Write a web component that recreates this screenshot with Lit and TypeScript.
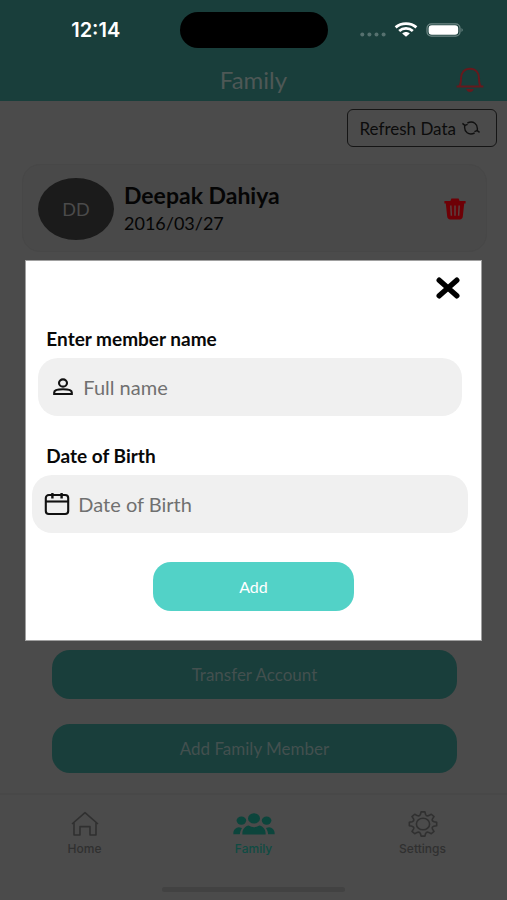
import { LitElement, html, css, svg } from "lit";
import { customElement } from "lit/decorators.js";

const gearPath = (() => {
  const points: string[] = [];
  const teeth = 8;
  for (let i = 0; i < teeth; i++) {
    const base = (i * 2 * Math.PI) / teeth - Math.PI / 2;
    const at = (offset: number, r: number) =>
      `${(16 + r * 1.13 * Math.cos(base + offset)).toFixed(2)} ${(14 + r * Math.sin(base + offset)).toFixed(2)}`;
    points.push(`${i === 0 ? "M" : "L"}${at(-0.24, 9.8)}`);
    points.push(`L${at(-0.14, 12.2)}`);
    points.push(`L${at(0.14, 12.2)}`);
    points.push(`L${at(0.24, 9.8)}`);
    points.push(`Q${at(0.39, 8.2)} ${at(0.54, 9.8)}`);
  }
  return points.join(" ") + "Z";
})();

const icons = {
  wifi: svg`<svg width="24" height="16" viewBox="0 0 24 16" aria-hidden="true">
    <g fill="none" stroke="#fff" stroke-width="2.8">
      <path d="M1.6 5.4C7.4 0.4 16.6 0.4 22.4 5.4"/><path d="M5.2 9C9 5.6 15 5.6 18.8 9"/>
    </g>
    <path d="M8.2 11.4C10.4 9.4 13.6 9.4 15.8 11.4L12 14.8Z" fill="#fff"/></svg>`,
  battery: svg`<svg width="38" height="14" viewBox="0 0 38 14" aria-hidden="true">
    <rect x="1" y="0.8" width="33" height="12.4" rx="4.4" fill="none" stroke="#6f8886" stroke-width="1.2"/>
    <rect x="2.6" y="2.2" width="29.6" height="9.6" rx="3.2" fill="#fff"/>
    <path d="M35.5 5Q38 7 35.5 9Z" fill="#6f8886"/></svg>`,
  dots: svg`<svg width="26" height="5" viewBox="0 0 26 5" aria-hidden="true" fill="#56716f">
    <circle cx="2.3" cy="2.5" r="2"/><circle cx="9.4" cy="2.5" r="2"/><circle cx="16.5" cy="2.5" r="2"/><circle cx="23.6" cy="2.5" r="2"/></svg>`,
  bell: svg`<svg width="28" height="26" viewBox="0 0 28 26" aria-hidden="true">
    <path d="M0.6 19.4H27.4M3.2 19.3C5 17 5 15 5 11.5C5 5.5 8.4 1.8 14 1.8C19.6 1.8 23 5.5 23 11.5C23 15 23 17 24.8 19.3" fill="none" stroke="#66191d" stroke-width="2"/>
    <path d="M10.2 22H17.8Q17 25 14 25Q11 25 10.2 22Z" fill="#66191d"/></svg>`,
  refresh: svg`<svg width="18" height="14" viewBox="0 0 18 14" aria-hidden="true" fill="none" stroke="#101010" stroke-width="1.4">
    <path d="M5.4 2C11 -0.6 16.4 2.8 15.2 9.4M12.6 12C7 14.6 1.6 11.2 2.8 4.6"/>
    <path d="M0.4 2.4L2.8 4.4L5.6 3.4M17.6 11.4L15.2 9.6L12.4 10.6"/></svg>`,
  trash: svg`<svg width="22" height="22" viewBox="0 0 22 22" aria-hidden="true">
    <path d="M0.4 3H6.4L7.4 0.4H14.6L15.6 3H21.6V5.4H20.2L18.8 18.6Q18.5 21.4 15.8 21.4H6.2Q3.5 21.4 3.2 18.6L1.8 5.4H0.4Z" fill="#6e0006"/>
    <path d="M6.8 7.5L7.4 17.8M11 7.5V17.8M15.2 7.5L14.6 17.8" stroke="#5b4040" stroke-width="1.5"/></svg>`,
  close: svg`<svg width="24" height="22" viewBox="0 0 24 22" aria-hidden="true">
    <path d="M3.2 3.2L20.8 18.8M20.8 3.2L3.2 18.8" stroke="#000" stroke-width="5.4" stroke-linecap="round"/></svg>`,
  person: svg`<svg width="20" height="18" viewBox="0 0 20 18" aria-hidden="true" fill="none" stroke="#111" stroke-width="2.1">
    <ellipse cx="10" cy="5" rx="4" ry="3.6"/><path d="M1.2 16V14.4C1.2 10.2 18.8 10.2 18.8 14.4V16Z"/></svg>`,
  calendar: svg`<svg width="26" height="24" viewBox="0 0 26 24" aria-hidden="true" fill="none" stroke="#111" stroke-width="2.1">
    <rect x="1.8" y="3" width="22.4" height="19" rx="3"/><path d="M1.8 9.5H24.2"/><path d="M8.4 1V6.5M17.6 1V6.5" stroke-width="2.4"/></svg>`,
  home: svg`<svg width="28" height="26" viewBox="0 0 28 26" aria-hidden="true" fill="none" stroke="#303030" stroke-width="1.6" stroke-linejoin="round">
    <path d="M1 13L14 1.6L27 13M3 11.8V24H9V15.6H19V24H25V11.8"/></svg>`,
  family: svg`<svg width="42" height="24" viewBox="0 0 42 24" aria-hidden="true" fill="#0c453c">
    <ellipse cx="21" cy="6.4" rx="6" ry="5.2"/><ellipse cx="8.4" cy="8.6" rx="4.8" ry="4.2"/><ellipse cx="33.6" cy="8.6" rx="4.8" ry="4.2"/>
    <path d="M9.4 22.4C9 17 12.6 14.2 15.6 13.6Q21 17 26.4 13.6C29.4 14.2 33 17 32.6 22.4Z"/>
    <path d="M0.4 22.2C0 18 2.6 15.6 6 15.2L9 16Q7.2 18.8 6.8 22.2ZM41.6 22.2C42 18 39.4 15.6 36 15.2L33 16Q34.8 18.8 35.2 22.2Z"/></svg>`,
  settings: svg`<svg width="32" height="28" viewBox="0 0 32 28" aria-hidden="true" fill="none" stroke="#303030" stroke-width="1.6" stroke-linejoin="round">
    <path d=${gearPath}/><ellipse cx="16" cy="14" rx="6.6" ry="5.8"/></svg>`,
};

@customElement("app-root")
export class AppRoot extends LitElement {
  static styles = css`
    :host {
      display: block;
      font-family: Lato, "Liberation Sans", sans-serif;
    }
    * { box-sizing: border-box; }
    svg { display: block; flex: none; }
    button, input { font: inherit; margin: 0; border: 0; }
    button { padding: 0; background: none; }
    h1, h2, p { margin: 0; }
    .screen {
      position: relative;
      min-height: 100vh;
      display: flex;
      flex-direction: column;
      background: #4b4b4b;
      color: #050505;
    }
    .top { background: #193e3b; height: 101px; }
    .status {
      display: grid;
      grid-template-columns: 1fr 148px 1fr;
      align-items: center;
      height: 60px;
    }
    .time {
      padding-left: 12px;
      text-align: center;
      color: #fff;
      font: 600 20px/24px Inter, sans-serif;
    }
    .island { height: 36px; border-radius: 18px; background: #000; }
    .signals { display: flex; align-items: center; gap: 8px; padding-left: 32px; }
    .dots { padding-top: 8px; }
    .titlebar {
      display: grid;
      grid-template-columns: 1fr auto 1fr;
      align-items: center;
      height: 40px;
      padding: 0 23px;
    }
    .titlebar h1 { grid-column: 2; font-size: 24px; line-height: 28px; font-weight: 400; color: #4e5856; }
    .bell { justify-self: end; }
    .content { flex: 1; display: flex; flex-direction: column; padding: 8px 20px 20px 22px; }
    .refresh {
      align-self: flex-end;
      display: flex;
      align-items: center;
      gap: 6px;
      height: 38px;
      margin-right: -10px;
      padding: 0 16px 0 11px;
      border: 1px solid #151515;
      border-radius: 6px;
      font-size: 17px;
      color: #0c0c0c;
    }
    .card {
      display: flex;
      align-items: center;
      gap: 10px;
      height: 88px;
      margin-top: 17px;
      padding: 2px 20px 0 15px;
      border-radius: 18px;
      border: 1px solid #474747;
      background: #494949;
    }
    .avatar {
      display: grid;
      place-items: center;
      width: 76px;
      height: 62px;
      border-radius: 50%;
      background: #1b1b1b;
      color: #4b4b4b;
      font-size: 18px;
    }
    .who { flex: 1; }
    .who h2 { font-size: 23px; line-height: 28px; font-weight: 700; }
    .who p { font-size: 18px; line-height: 28px; }
    .actions {
      display: flex;
      flex-direction: column;
      align-items: center;
      gap: 25px;
      margin-top: auto;
    }
    .wide {
      width: 87%;
      height: 49px;
      border-radius: 18px;
      background: #193e3b;
      color: #43504f;
      font-size: 17px;
    }
    .nav {
      display: grid;
      grid-template-columns: repeat(3, 1fr);
      height: 94px;
      padding-top: 15px;
      border-top: 2px solid #484848;
    }
    .nav a {
      display: flex;
      flex-direction: column;
      align-items: center;
      gap: 3px;
      text-decoration: none;
      color: #303030;
      font: 500 12px/16px Inter, sans-serif;
    }
    .nav a.current { color: #0f4b43; }
    .glyph { height: 28px; display: grid; place-items: center; }
    .handle {
      align-self: center;
      width: 36%;
      height: 5px;
      margin-bottom: 8px;
      border-radius: 3px;
      background: #424242;
    }
    .layer {
      position: absolute;
      inset: 0;
      display: grid;
      place-items: center;
    }
    .modal {
      display: flex;
      flex-direction: column;
      width: 90%;
      padding: 16px 13px 29px 6px;
      border: 1px solid #a0a0a0;
      background: #fff;
    }
    .close { align-self: flex-end; margin: 0 8px 28px 0; }
    .modal label { margin-left: 14px; font-size: 19px; line-height: 24px; font-weight: 700; color: #080808; }
    .field {
      display: flex;
      align-items: center;
      gap: 8px;
      height: 58px;
      margin-top: 7px;
      padding: 0 12px;
      border-radius: 20px;
      background: #f0f0f0;
    }
    .name { margin: 7px 6px 28px 6px; padding: 0 15px; gap: 10px; }
    .field input {
      flex: 1;
      min-width: 0;
      padding: 0;
      background: none;
      outline: none;
      font-size: 20px;
      line-height: 24px;
    }
    .field input::placeholder { color: #707070; opacity: 1; }
    .add {
      align-self: center;
      width: 46%;
      height: 49px;
      margin: 29px 0 0 7px;
      border-radius: 18px;
      background: #52d2c7;
      color: #fff;
      font-size: 16px;
    }
  `;

  private submit(event: Event) {
    event.preventDefault();
  }

  render() {
    return html`
      <div class="screen">
        <header class="top">
          <div class="status">
            <div class="time">12:14</div>
            <div class="island"></div>
            <div class="signals"><span class="dots">${icons.dots}</span>${icons.wifi}${icons.battery}</div>
          </div>
          <div class="titlebar">
            <h1>Family</h1>
            <button class="bell" aria-label="Notifications">${icons.bell}</button>
          </div>
        </header>
        <main class="content">
          <button class="refresh">Refresh Data ${icons.refresh}</button>
          <section class="card">
            <div class="avatar">DD</div>
            <div class="who"><h2>Deepak Dahiya</h2><p>2016/03/27</p></div>
            <button aria-label="Delete member">${icons.trash}</button>
          </section>
          <div class="actions">
            <button class="wide">Transfer Account</button>
            <button class="wide">Add Family Member</button>
          </div>
        </main>
        <nav class="nav">
          <a href="#home"><span class="glyph">${icons.home}</span>Home</a>
          <a href="#family" class="current" aria-current="page"><span class="glyph">${icons.family}</span>Family</a>
          <a href="#settings"><span class="glyph">${icons.settings}</span>Settings</a>
        </nav>
        <div class="handle"></div>
        <div class="layer">
          <form class="modal" role="dialog" aria-label="Add member" @submit=${this.submit}>
            <button type="button" class="close" aria-label="Close">${icons.close}</button>
            <label for="name">Enter member name</label>
            <div class="field name">${icons.person}<input id="name" type="text" placeholder="Full name" /></div>
            <label for="birth">Date of Birth</label>
            <div class="field">${icons.calendar}<input id="birth" type="text" placeholder="Date of Birth" /></div>
            <button type="submit" class="add">Add</button>
          </form>
        </div>
      </div>
    `;
  }
}
